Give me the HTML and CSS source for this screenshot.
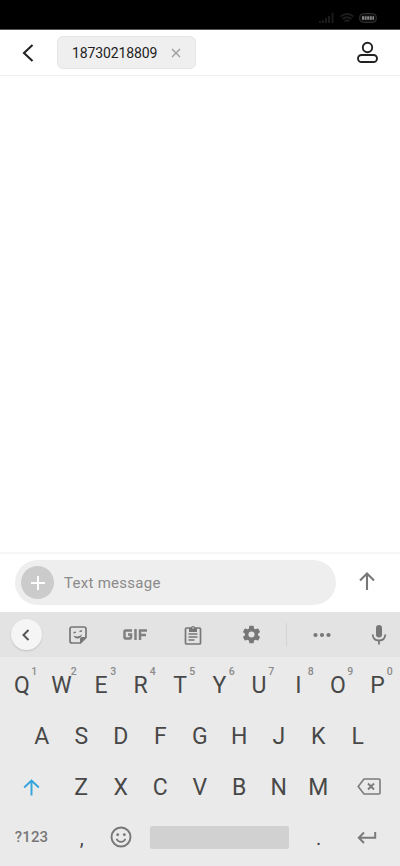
FILE: index.html
```html
<!DOCTYPE html>
<html lang="en">
<head>
<meta charset="utf-8">
<title>New message</title>
<link rel="stylesheet" href="styles.css">
</head>
<body>
<div class="status">
  <svg width="58" height="14" viewBox="0 0 58 14">
    <g fill="#1b1b1b"><rect x="0" y="9" width="2" height="2"/><rect x="3" y="8" width="2" height="3"/><rect x="6" y="6" width="2" height="5"/><rect x="9" y="4" width="2" height="7"/><rect x="12.500" y="1" width="2" height="10"/></g>
    <g fill="none" stroke="#1d1d1d" stroke-width="1.800"><path d="M21.500 4.500Q28 -.5 34.500 4.500M23.500 7Q28 3.500 32.500 7M25.500 9.300Q28 7.500 30.500 9.300"/></g>
    <rect x="40.500" y="1.500" width="17" height="9" rx="4" fill="#111" stroke="#303030"/>
    <path d="M43 6h12" stroke="#858585" stroke-width="3.500" stroke-dasharray="2 .6"/>
  </svg>
</div>
<header class="header">
  <svg class="back" width="14" height="20" viewBox="0 0 14 20"><path d="M11.500 2L3 10l8.500 8" fill="none" stroke="#222" stroke-width="2.100"/></svg>
  <div class="chip"><span>18730218809</span>
    <svg width="10" height="10" viewBox="0 0 10 10"><path d="M1 1l8 8M9 1L1 9" stroke="#999" stroke-width="1.200"/></svg>
  </div>
  <svg class="contact" width="22" height="24" viewBox="0 0 22 24"><g fill="none" stroke="#222" stroke-width="1.900"><circle cx="11.500" cy="6.500" r="4.700"/><rect x="2" y="14" width="19" height="7" rx="3.500"/></g></svg>
</header>
<main class="thread"></main>
<div class="composer">
  <div class="field">
    <div class="plus"><svg width="16" height="16" viewBox="0 0 16 16"><path d="M8 1v14M1 8h14" stroke="#fff" stroke-width="1.900"/></svg></div>
    <span>Text message</span>
  </div>
  <svg class="send" width="16" height="19" viewBox="0 0 16 19"><path d="M8 18V1.500M1 8.500l7-7 7 7" fill="none" stroke="#777" stroke-width="2.100"/></svg>
</div>
<section class="keyboard">
  <div class="tools">
    <div><span class="round"><svg width="10" height="12" viewBox="0 0 10 12"><path d="M7.500 1L2.500 6l5 5" fill="none" stroke="#555" stroke-width="2"/></svg></span></div>
    <div><svg width="18" height="18" viewBox="0 0 18 18"><path d="M3 1h12q2 0 2 2v8.500L11.500 17H3q-2 0-2-2V3q0-2 2-2z" fill="none" stroke="#777" stroke-width="1.700"/><path d="M17 11h-4q-2 0-2 2v4z" fill="#777"/><path d="M4.500 9.500Q9 12 13 8.500Q12 12.500 8.500 12.500Q5.500 12.500 4.500 9.500z" fill="#777"/><path d="M4.500 6.800l2.500-.7M10.500 5.500l2.500-.7" stroke="#777" stroke-width="1.500"/></svg></div>
    <div><svg width="24" height="11" viewBox="0 0 24 11"><path d="M9 1.500H2.500q-1 0-1 1v6q0 1 1 1H7q1 0 1-1V5.500H5M12.500 0v11M17 11V1.500h7M17 6h6" fill="none" stroke="#808080" stroke-width="2.500"/></svg></div>
    <div><svg width="18" height="20" viewBox="0 0 18 20"><rect x="1.500" y="3" width="15" height="16" rx="1" fill="none" stroke="#777" stroke-width="1.700"/><path d="M5 3h2a2 2 0 014 0h2v4H5z" fill="#777"/><circle cx="9" cy="3" r=".8" fill="#e3e3e3"/><path d="M4.500 9h9M4.500 12h9M4.500 15h6" stroke="#777" stroke-width="1.400"/></svg></div>
    <div><svg width="21" height="21" viewBox="0 0 24 24"><path fill="#777" d="M19.430 12.980c.04-.32.07-.64.07-.98s-.03-.66-.07-.98l2.110-1.650c.19-.15.24-.42.12-.64l-2-3.460c-.12-.22-.39-.3-.61-.22l-2.490 1c-.52-.4-1.080-.73-1.690-.98l-.38-2.650C14.460 2.180 14.250 2 14 2h-4c-.25 0-.46.18-.49.42l-.38 2.650c-.61.25-1.170.59-1.690.98l-2.490-1c-.23-.09-.49 0-.61.22l-2 3.460c-.13.22-.07.49.12.64l2.110 1.650c-.04.32-.07.65-.07.98s.03.66.07.98l-2.110 1.650c-.19.15-.24.42-.12.64l2 3.460c.12.22.39.3.61.22l2.490-1c.52.4 1.080.73 1.690.98l.38 2.650c.03.24.24.42.49.42h4c.25 0 .46-.18.49-.42l.38-2.650c.61-.25 1.170-.59 1.690-.98l2.490 1c.23.09.49 0 .61-.22l2-3.460c.12-.22.07-.49-.12-.64l-2.110-1.650zM12 15.500A3.500 3.500 0 1112 8.500a3.500 3.500 0 010 7z"/></svg></div>
    <div><i class="rule"></i></div>
    <div><svg width="18" height="6" viewBox="0 0 18 6" fill="#777"><circle cx="2.500" cy="3" r="2.100"/><circle cx="9" cy="3" r="2.100"/><circle cx="15.500" cy="3" r="2.100"/></svg></div>
    <div class="mic"><svg width="16" height="20" viewBox="0 0 16 20"><rect x="5" y="0" width="6" height="12.500" rx="3" fill="#777"/><path d="M1.700 9.500q.3 6 6.300 6t6.300-6M8 15v4.500" fill="none" stroke="#777" stroke-width="1.800"/></svg></div>
  </div>
  <div class="row top">
    <div class="key">Q<sup>1</sup></div><div class="key">W<sup>2</sup></div><div class="key">E<sup>3</sup></div><div class="key">R<sup>4</sup></div><div class="key">T<sup>5</sup></div><div class="key">Y<sup>6</sup></div><div class="key">U<sup>7</sup></div><div class="key">I<sup>8</sup></div><div class="key">O<sup>9</sup></div><div class="key">P<sup>0</sup></div>
  </div>
  <div class="row middle">
    <div class="key">A</div><div class="key">S</div><div class="key">D</div><div class="key">F</div><div class="key">G</div><div class="key">H</div><div class="key">J</div><div class="key">K</div><div class="key">L</div>
  </div>
  <div class="row lower">
    <div class="key shift"><svg width="17" height="17" viewBox="0 0 17 17"><path d="M8.500 16.500V1.500M1.200 8.500l7.300-7 7.300 7" fill="none" stroke="#35a4dc" stroke-width="1.900"/></svg></div>
    <div class="key">Z</div><div class="key">X</div><div class="key">C</div><div class="key">V</div><div class="key">B</div><div class="key">N</div><div class="key">M</div>
    <div class="key erase"><svg width="24" height="17" viewBox="0 0 24 17"><path d="M7 1h15q1 0 1 1v13q0 1-1 1H7L1.200 8.500z" fill="none" stroke="#7b7b7b" stroke-width="1.600"/><path d="M11 5.500l6 6M17 5.500l-6 6" stroke="#7b7b7b" stroke-width="1.900"/></svg></div>
  </div>
  <div class="row bottom">
    <div class="key symbols">?123</div>
    <div class="key mark">,</div>
    <div class="key emoji"><svg width="22" height="22" viewBox="0 0 22 22"><circle cx="11" cy="11" r="9.500" fill="none" stroke="#777" stroke-width="1.900"/><circle cx="7.700" cy="8.700" r="1.400" fill="#777"/><circle cx="14.300" cy="8.700" r="1.400" fill="#777"/><path d="M6.500 12.800q1.400 3 4.500 3t4.500-3" fill="none" stroke="#777" stroke-width="1.700"/></svg></div>
    <div class="space"></div>
    <div class="key mark">.</div>
    <div class="key enter"><svg width="20" height="13" viewBox="0 0 20 13"><path d="M18.200 1v5.700H2M7 1.500L1.800 6.700 7 12" fill="none" stroke="#7b7b7b" stroke-width="2"/></svg></div>
  </div>
</section>
</body>
</html>
```
FILE: styles.css
```css
* { box-sizing: border-box; }
body {
  margin: 0;
  height: 866px;
  display: flex;
  flex-direction: column;
  overflow: hidden;
  background: #fff;
  font-family: Roboto, sans-serif;
}
svg { display: block; flex: none; }
.status {
  height: 30px;
  padding: 12px 23px 0 0;
  display: flex;
  justify-content: flex-end;
  background: #000;
  border-bottom: 1px solid #555;
}
.header {
  height: 46px;
  display: flex;
  align-items: center;
  padding: 0 22px 0 21px;
  border-bottom: 1px solid #eee;
}
.chip {
  width: 139px;
  height: 33px;
  margin-left: 22px;
  padding: 0 14px;
  display: flex;
  align-items: center;
  justify-content: space-between;
  background: #efefef;
  border: 1px solid #e5e5e5;
  border-radius: 6px;
  color: #222;
  font-size: 14px;
  letter-spacing: -0.120px;
}
.contact { margin-left: auto; }
.thread { flex: 1; }
.composer {
  height: 60px;
  padding: 0 25px 1px 15px;
  display: flex;
  align-items: center;
  justify-content: space-between;
  border-top: 2px solid #f6f6f6;
}
.field {
  width: 321px;
  height: 45px;
  padding-left: 6px;
  display: flex;
  align-items: center;
  gap: 10px;
  border-radius: 23px;
  background: #eee;
  color: #8a8a8a;
  font-size: 15px;
  letter-spacing: 0.280px;
}
.send { margin-bottom: 3px; }
.plus {
  width: 33px;
  height: 33px;
  display: grid;
  place-items: center;
  border-radius: 50%;
  background: #cbcbcb;
}
.keyboard { height: 254px; background: #eaeaea; }
.tools {
  height: 45px;
  display: grid;
  grid-template-columns: 52px 52px 62px 54px 62px 8px 64px 46px;
  background: #e3e3e3;
}
.tools > div { display: grid; place-items: center; }
.tools .mic { padding-left: 4px; }
.round {
  width: 31px;
  height: 31px;
  display: grid;
  place-items: center;
  border-radius: 50%;
  background: #f5f5f5;
  box-shadow: 0 1px 2px rgba(0, 0, 0, 0.150);
}
.rule { width: 1px; height: 23px; background: #d3d3d3; }
.row { height: 51px; display: flex; align-items: center; color: #484848; font-size: 23px; }
.key {
  width: 39.500px;
  height: 100%;
  display: flex;
  align-items: center;
  justify-content: center;
  position: relative;
}
.key sup {
  position: absolute;
  left: 28px;
  top: 6px;
  width: 8px;
  text-align: center;
  font-size: 10.500px;
  font-weight: 500;
  line-height: 12px;
  color: #8a8a8a;
}
.top { margin-top: 3px; padding-left: 2.250px; }
.middle { padding-left: 22px; }
.lower .shift { width: 61.500px; padding-left: 2px; }
.lower .erase { width: 62px; padding: 0 1px 2px 0; }
.bottom { height: 48px; }
.bottom .symbols { width: 62px; padding-left: 1px; color: #777; font-size: 15px; font-weight: 500; letter-spacing: 0.100px; }
.bottom .mark { font-size: 20px; padding-top: 2px; }
.bottom .emoji { padding-right: 1px; }
.space { width: 139px; height: 23px; margin: 0 10px 0 9px; border-radius: 2px; background: #d1d1d1; }
.bottom .enter { width: 60px; padding-right: 3px; }
```
